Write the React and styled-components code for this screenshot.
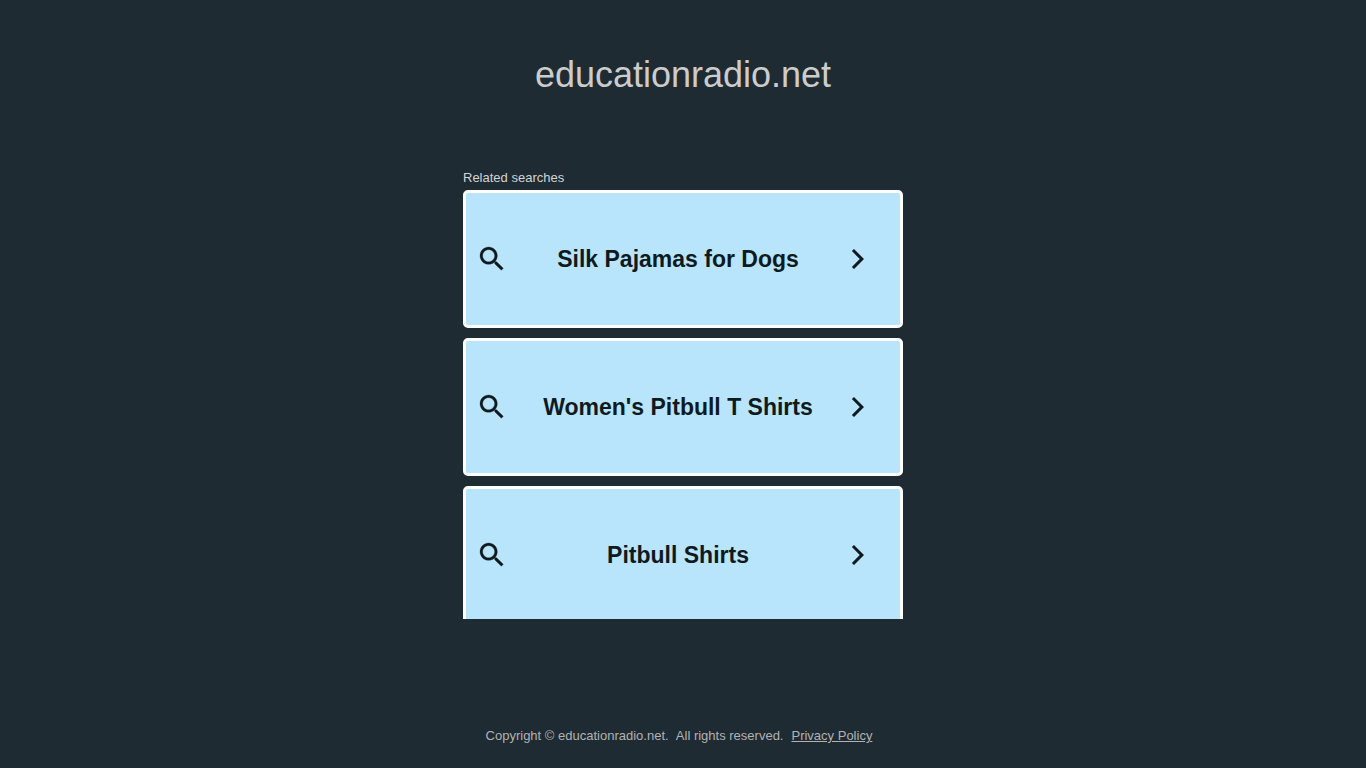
import React from 'react'
import styled, { createGlobalStyle } from 'styled-components'

const GlobalStyle = createGlobalStyle`
  body {
    margin: 0;
    background-color: #1e2b33;
    font-family: "Liberation Sans", Arial, sans-serif;
  }
`;

const Container = styled.div`
  min-height: 100vh;
  box-sizing: border-box;
  padding: 54px 20px 23px;
  display: flex;
  flex-direction: column;
  align-items: center;
`;

const Title = styled.h1`
  margin: 0 0 74px;
  font-size: 36px;
  line-height: 41px;
  font-weight: normal;
  color: #cccccc;
`;

const Searches = styled.section`
  width: 100%;
  max-width: 440px;
  height: 450px;
  overflow: hidden;
`;

const Heading = styled.h2`
  margin: 0 0 3px;
  font-size: 13px;
  line-height: 18px;
  font-weight: normal;
  color: #d4d4d4;
`;

const List = styled.div`
  display: flex;
  flex-direction: column;
  gap: 10px;
`;

const Card = styled.a`
  display: flex;
  align-items: center;
  height: 138px;
  box-sizing: border-box;
  padding: 0 30px 0 10px;
  border: 3px solid #ffffff;
  border-radius: 5px;
  background-color: #b8e5fc;
  color: #0f1a20;
  text-decoration: none;
`;

const CardText = styled.span`
  flex: 1;
  padding-left: 2px;
  text-align: center;
  font-size: 23px;
  line-height: 30px;
  font-weight: bold;
`;

const Icon = styled.svg`
  flex: none;
  width: ${props => props.$size}px;
  height: ${props => props.$size}px;
  fill: currentColor;
`;

const Footer = styled.footer`
  display: flex;
  flex-wrap: wrap;
  gap: 8px;
  margin-top: auto;
  padding-right: 8px;
  font-size: 13px;
  line-height: 18px;
  font-kerning: none;
  color: #b2b2b2;
`;

const Copyright = styled.span`
  white-space: pre-wrap;
`;

const FooterLink = styled.a`
  color: inherit;
`;

const searches = ["Silk Pajamas for Dogs", "Women's Pitbull T Shirts", "Pitbull Shirts"];

function SearchCard({ text }) {
  return (
    <Card href="#">
      <Icon $size={32} viewBox="0 0 24 24" aria-hidden="true">
        <path stroke="currentColor" strokeWidth="0.2" d="M15.5 14h-.79l-.28-.27C15.41 12.59 16 11.11 16 9.5 16 5.91 13.09 3 9.5 3S3 5.91 3 9.5 5.91 16 9.5 16c1.61 0 3.09-.59 4.23-1.57l.27.28v.79l5 4.99L20.49 19l-4.99-5zm-6 0C7.01 14 5 11.99 5 9.5S7.01 5 9.5 5 14 7.01 14 9.5 11.99 14 9.5 14z" />
      </Icon>
      <CardText>{text}</CardText>
      <Icon $size={24} viewBox="0 0 24 24" aria-hidden="true">
        <path d="M5.88 4.12L13.76 12l-7.88 7.88L8 22l10-10L8 2z" />
      </Icon>
    </Card>
  )
}

function App() {
  return (
    <>
      <GlobalStyle />
      <Container>
        <Title>educationradio.net</Title>
        <Searches>
          <Heading>Related searches</Heading>
          <List>
            {searches.map(text => <SearchCard key={text} text={text} />)}
          </List>
        </Searches>
        <Footer>
          <Copyright>{"Copyright © educationradio.net.  All rights reserved."}</Copyright>
          <FooterLink href="#">Privacy Policy</FooterLink>
        </Footer>
      </Container>
    </>
  )
}

export default App
